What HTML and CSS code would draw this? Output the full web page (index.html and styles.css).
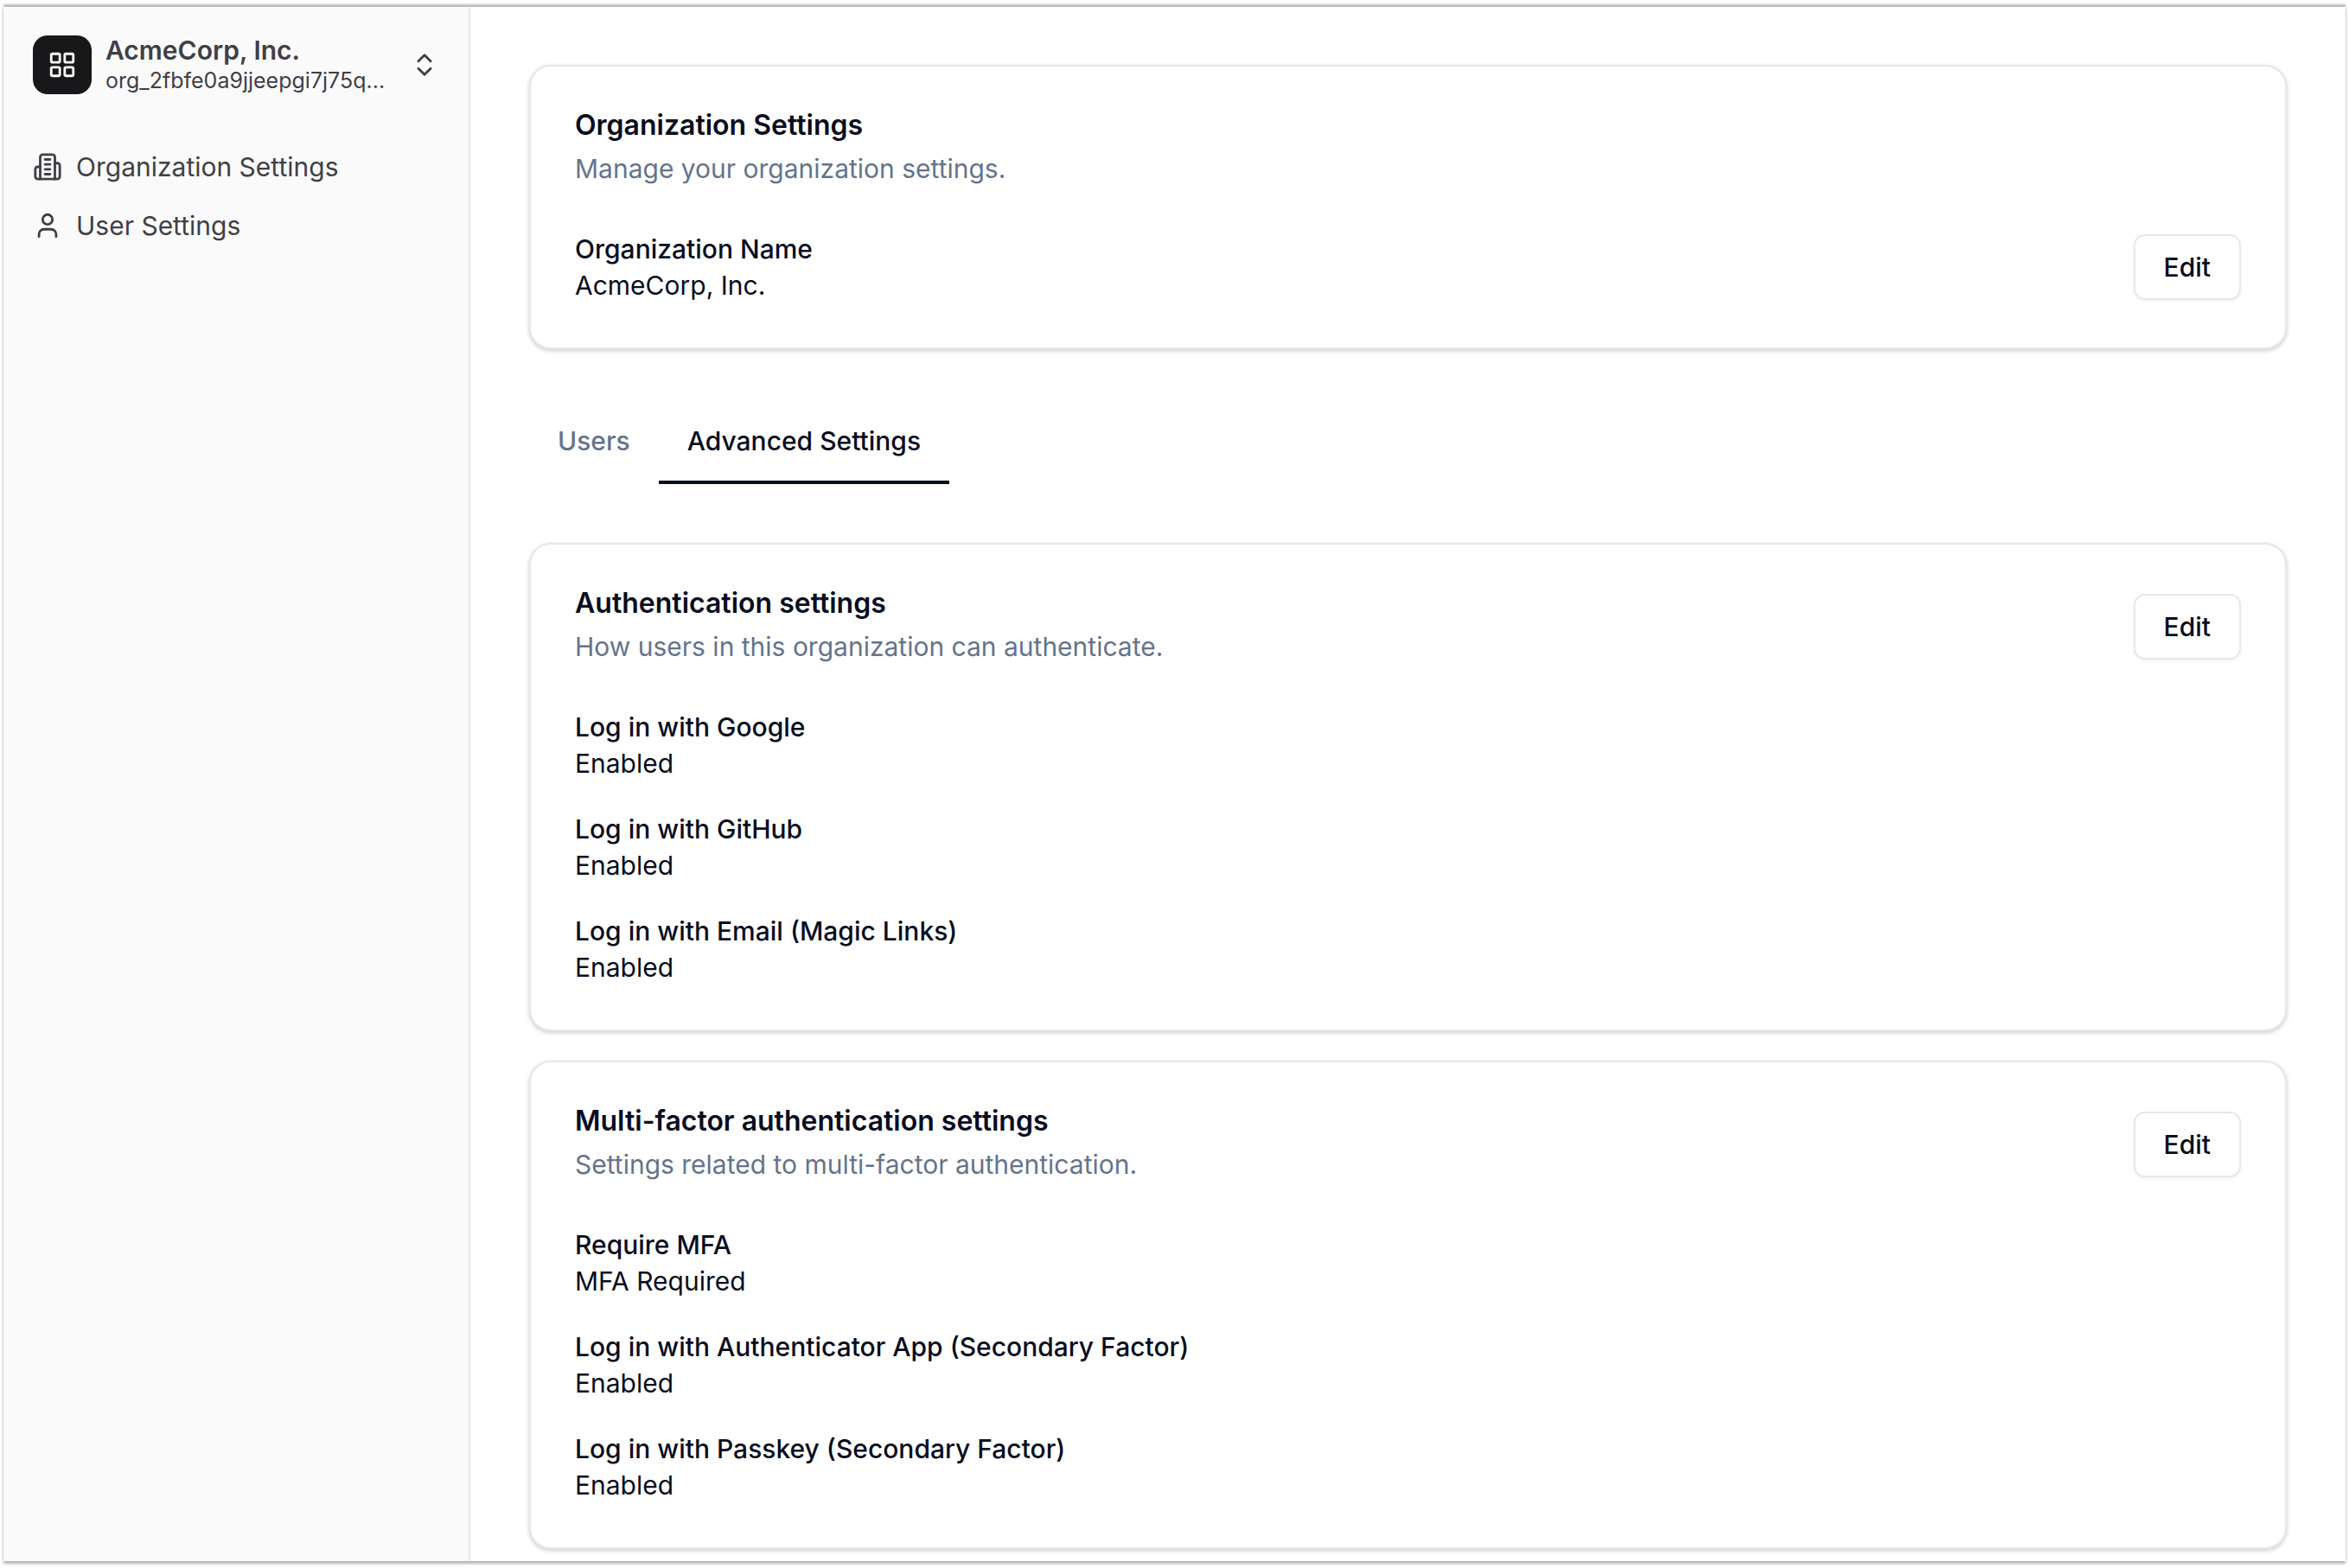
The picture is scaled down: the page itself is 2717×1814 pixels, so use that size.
FILE: index.html
```html
<!DOCTYPE html>
<html lang="en">
<head>
<meta charset="utf-8">
<meta name="viewport" content="width=device-width, initial-scale=1">
<title>Organization Settings</title>
<link rel="stylesheet" href="styles.css">
</head>
<body>
<div class="window">
  <aside class="sidebar">
    <button type="button" class="org-switcher">
      <span class="org-logo">
        <svg class="icon" viewBox="0 0 24 24" aria-hidden="true"><rect width="7" height="7" x="3" y="3" rx="1"/><rect width="7" height="7" x="14" y="3" rx="1"/><rect width="7" height="7" x="14" y="14" rx="1"/><rect width="7" height="7" x="3" y="14" rx="1"/></svg>
      </span>
      <span class="org-text">
        <span class="org-name">AcmeCorp, Inc.</span>
        <span class="org-id">org_2fbfe0a9jjeepgi7j75q...</span>
      </span>
      <svg class="icon" viewBox="0 0 24 24" aria-hidden="true"><path d="m7 15 5 5 5-5"/><path d="m7 9 5-5 5 5"/></svg>
    </button>
    <nav class="menu">
      <a class="menu-item" href="#organization">
        <svg class="icon" viewBox="0 0 24 24" aria-hidden="true"><path d="M6 22V4a2 2 0 0 1 2-2h8a2 2 0 0 1 2 2v18Z"/><path d="M6 12H4a2 2 0 0 0-2 2v6a2 2 0 0 0 2 2h2"/><path d="M18 9h2a2 2 0 0 1 2 2v9a2 2 0 0 1-2 2h-2"/><path d="M10 6h4"/><path d="M10 10h4"/><path d="M10 14h4"/><path d="M10 18h4"/></svg>
        Organization Settings
      </a>
      <a class="menu-item" href="#user">
        <svg class="icon" viewBox="0 0 24 24" aria-hidden="true"><path d="M19 21v-2a4 4 0 0 0-4-4H9a4 4 0 0 0-4 4v2"/><circle cx="12" cy="7" r="4"/></svg>
        User Settings
      </a>
    </nav>
  </aside>

  <main class="content">
    <section class="card" id="organization">
      <header class="card-header">
        <div class="card-heading">
          <h2 class="card-title">Organization Settings</h2>
          <p class="card-description">Manage your organization settings.</p>
        </div>
      </header>
      <div class="card-row">
        <dl class="details">
          <div><dt>Organization Name</dt><dd>AcmeCorp, Inc.</dd></div>
        </dl>
        <button type="button" class="button">Edit</button>
      </div>
    </section>

    <nav class="tabs">
      <a class="tab" href="#users">Users</a>
      <a class="tab tab-active" href="#advanced" aria-current="page">Advanced Settings</a>
    </nav>

    <div class="card-stack" id="advanced">
      <section class="card">
        <header class="card-header">
          <div class="card-heading">
            <h2 class="card-title">Authentication settings</h2>
            <p class="card-description">How users in this organization can authenticate.</p>
          </div>
          <button type="button" class="button">Edit</button>
        </header>
        <dl class="details">
          <div><dt>Log in with Google</dt><dd>Enabled</dd></div>
          <div><dt>Log in with GitHub</dt><dd>Enabled</dd></div>
          <div><dt>Log in with Email (Magic Links)</dt><dd>Enabled</dd></div>
        </dl>
      </section>

      <section class="card">
        <header class="card-header">
          <div class="card-heading">
            <h2 class="card-title">Multi-factor authentication settings</h2>
            <p class="card-description">Settings related to multi-factor authentication.</p>
          </div>
          <button type="button" class="button">Edit</button>
        </header>
        <dl class="details">
          <div><dt>Require MFA</dt><dd>MFA Required</dd></div>
          <div><dt>Log in with Authenticator App (Secondary Factor)</dt><dd>Enabled</dd></div>
          <div><dt>Log in with Passkey (Secondary Factor)</dt><dd>Enabled</dd></div>
        </dl>
      </section>
    </div>
  </main>
</div>
</body>
</html>
```
FILE: styles.css
```css
:root {
  --ink: #080d20;
  --muted: #64748b;
  --line: #e2e8f0;
  --sidebar-bg: #fafafa;
  --sidebar-ink: #3f3f46;
}

* {
  box-sizing: border-box;
  margin: 0;
  padding: 0;
}

body {
  min-height: 100vh;
  display: flex;
  padding: 8px 4px;
  background: #fff;
  color: var(--ink);
  font-family: Inter, "Liberation Sans", sans-serif;
  font-size: 30px;
  line-height: 42px;
}

.window {
  flex: 1;
  display: flex;
  background: #fff;
  box-shadow: 0 -3px 2px #bbb, 0 3px 3px #b4b4b4;
}

.icon {
  flex: none;
  width: 34px;
  height: 34px;
  fill: none;
  stroke: currentColor;
  stroke-width: 2;
  stroke-linecap: round;
  stroke-linejoin: round;
}

.sidebar {
  flex: none;
  width: 540px;
  padding: 32px 34px;
  border-right: 2px solid var(--line);
  background: var(--sidebar-bg);
  color: var(--sidebar-ink);
}

.org-switcher {
  width: 100%;
  display: flex;
  align-items: center;
  gap: 16px;
  border: 0;
  background: none;
  color: inherit;
  font: inherit;
  text-align: left;
}

.org-logo {
  flex: none;
  width: 68px;
  height: 68px;
  display: flex;
  align-items: center;
  justify-content: center;
  border-radius: 17px;
  background: #18181b;
  color: #fafafa;
}

.org-text {
  flex: 1;
  min-width: 0;
  display: flex;
  flex-direction: column;
}

.org-name {
  font-weight: 600;
  line-height: 36px;
}

.org-id {
  font-size: 25px;
  line-height: 34px;
  white-space: nowrap;
}

.menu {
  display: flex;
  flex-direction: column;
  padding-top: 49px;
}

.menu-item {
  height: 68px;
  display: flex;
  align-items: center;
  gap: 16px;
  color: inherit;
  text-decoration: none;
}

.content {
  flex: 1;
  min-width: 0;
  padding: 67px 68px 13px;
}

.card {
  padding: 50px 51px 51px;
  border: 2px solid var(--line);
  border-radius: 25px;
  background: #fff;
  box-shadow: 0 2px 6px rgb(0 0 0 / 10%), 0 2px 4px rgb(0 0 0 / 10%);
}

.card-header,
.card-row {
  display: flex;
  align-items: center;
  justify-content: space-between;
}

.card-header {
  margin-bottom: 51px;
}

.card-heading {
  display: grid;
  gap: 11px;
}

.card-title {
  font-size: 32px;
  font-weight: 600;
  line-height: 36px;
}

.card-description {
  color: var(--muted);
}

.details {
  display: grid;
  gap: 34px;
}

dt {
  font-weight: 500;
}

.button {
  height: 76px;
  padding: 0 33px;
  border: 2px solid var(--line);
  border-radius: 13px;
  background: #fff;
  box-shadow: 0 2px 4px rgb(0 0 0 / 5%);
  color: inherit;
  font: inherit;
  font-weight: 500;
}

.tabs {
  display: flex;
  margin: 68px 0;
}

.tab {
  padding: 17px 33px 25px;
  border-bottom: 4px solid transparent;
  color: var(--muted);
  font-weight: 500;
  text-decoration: none;
}

.tab-active {
  border-color: var(--ink);
  color: var(--ink);
}

.card-stack {
  display: grid;
  gap: 34px;
}
```
